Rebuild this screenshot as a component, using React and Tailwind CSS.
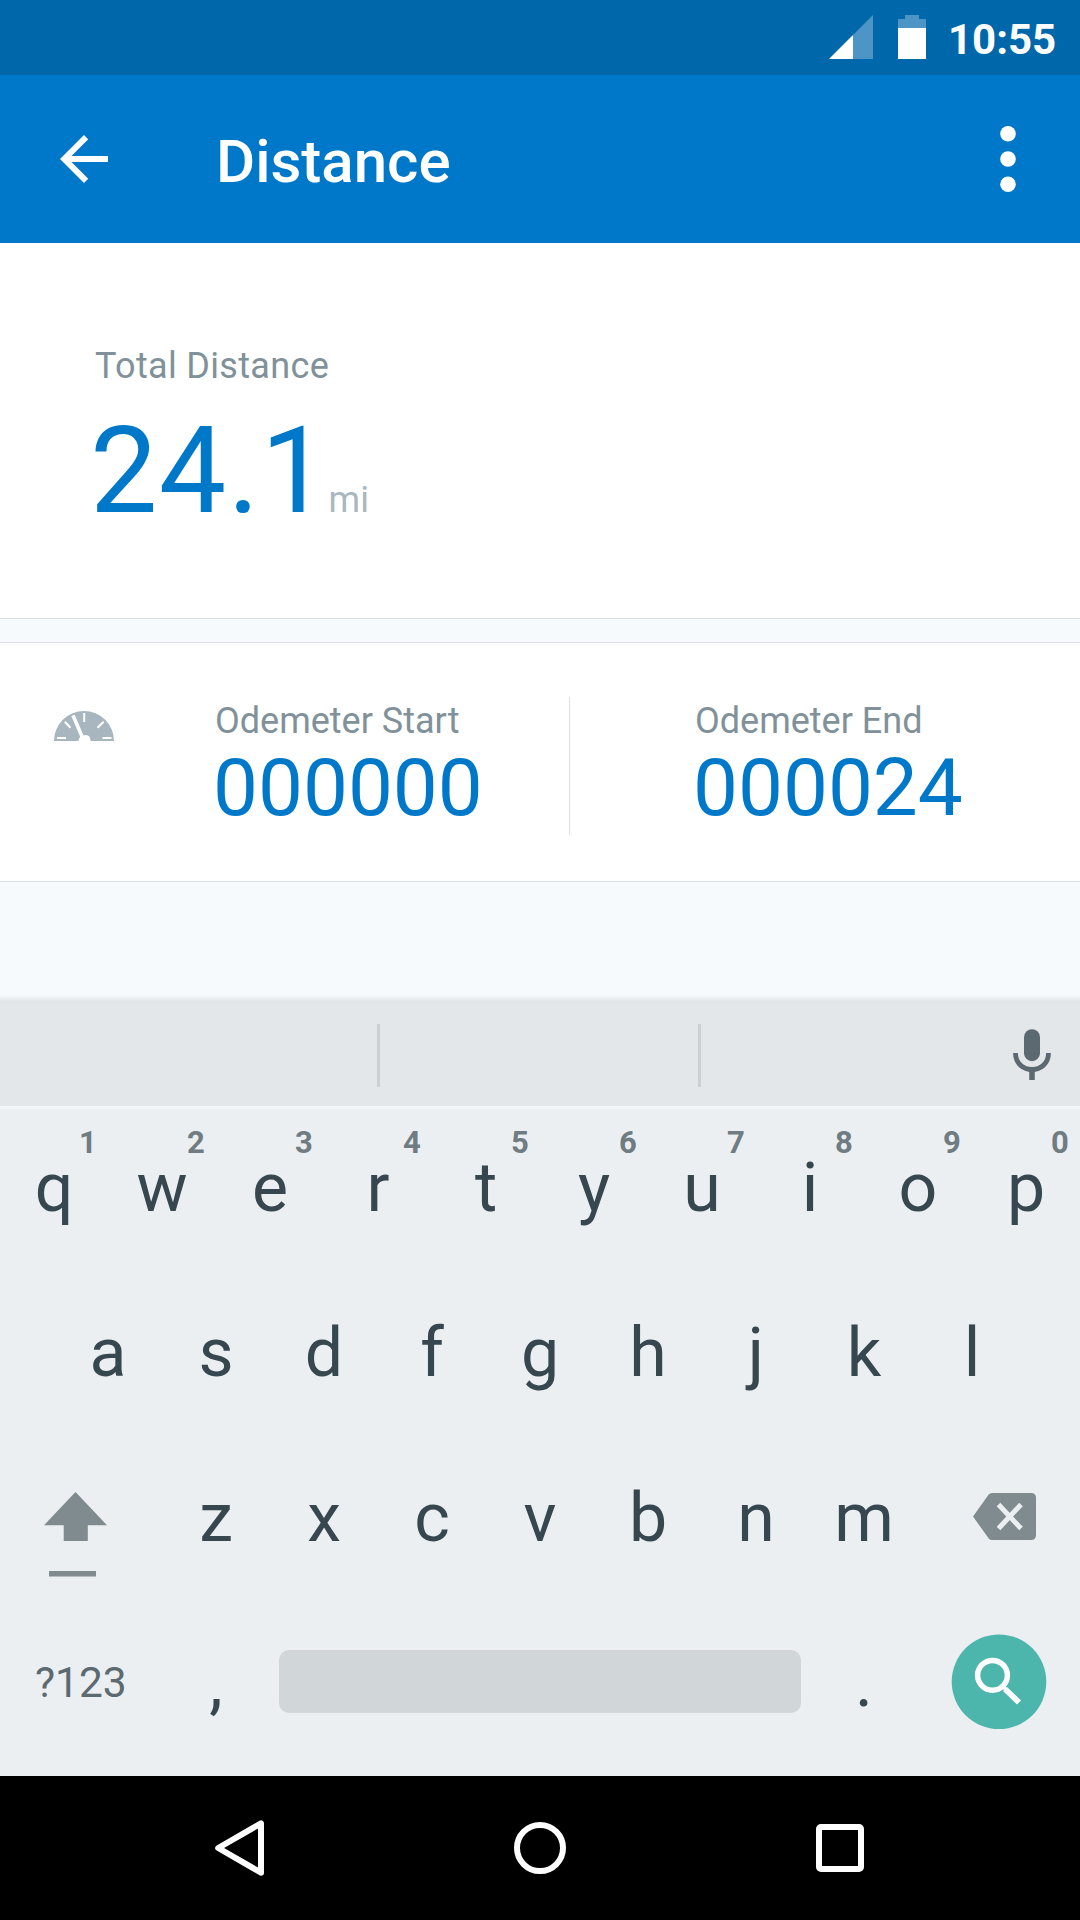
const topRow = [
  ["q", "1"], ["w", "2"], ["e", "3"], ["r", "4"], ["t", "5"],
  ["y", "6"], ["u", "7"], ["i", "8"], ["o", "9"], ["p", "0"],
];
const homeRow = ["a", "s", "d", "f", "g", "h", "j", "k", "l"];
const bottomRow = ["z", "x", "c", "v", "b", "n", "m"];

function StatusBar() {
  return (
    <div className="flex h-[75px] bg-[#0067ab] pl-[829px] text-white">
      <svg className="mt-[15px] h-[44px] w-[44px]" viewBox="0 0 44 44" fill="#fff">
        <path d="M44 0V44H0Z" opacity=".3" />
        <path d="M24 20V44H0Z" />
      </svg>
      <svg className="mt-[15px] ml-[25px] h-[44px] w-[28px]" viewBox="0 0 28 44" fill="#fff">
        <path d="M7 0H21V4H28V13H0V4H7Z" opacity=".3" />
        <path d="M0 13H28V44H0Z" />
      </svg>
      <span className="ml-[22px] text-[42px] leading-[80px] font-bold">10:55</span>
    </div>
  );
}

function AppBar() {
  return (
    <header className="flex h-[168px] items-center bg-[#0078c9] text-white">
      <svg className="ml-[48px] size-[72px]" viewBox="0 0 24 24" fill="currentColor">
        <path d="M20 11H7.83l5.59-5.59L12 4l-8 8 8 8 1.41-1.41L7.83 13H20v-2z" />
      </svg>
      <h1 className="ml-[96px] pt-[5px] text-[60px] leading-[72px] font-medium">Distance</h1>
      <svg className="ml-auto mr-[64px] h-[66px] w-[16px]" viewBox="0 0 16 66" fill="currentColor">
        <circle cx="8" cy="7.8" r="7.8" />
        <circle cx="8" cy="33" r="7.8" />
        <circle cx="8" cy="58.2" r="7.8" />
      </svg>
    </header>
  );
}

function Reading({ label, value }) {
  return (
    <div className="flex flex-col">
      <span className="text-[36px] leading-[42px] text-[#80919a]">{label}</span>
      <span className="mt-[6px] -ml-[2px] text-[80px] leading-[80px] text-[#0078c9]">{value}</span>
    </div>
  );
}

function GaugeIcon() {
  return (
    <svg className="mt-[68px] ml-[54px] h-[30px] w-[60px]" viewBox="0 0 60 30">
      <path d="M0 30A30 30 0 0 1 60 30Z" fill="#a7b6bf" />
      <g stroke="#fff" strokeWidth="2">
        <path d="M3 27H12M48.500 27H57.500M30.200 2V11M10.800 10.700L16.500 16.700M49.700 10.700L43.500 16.700" />
      </g>
      <path d="M17.300 5L20.700 3.800L29.500 24.300Q36.500 22.500 36.500 30H24.500Q24.500 27.500 26.200 25.800Z" fill="#fff" />
    </svg>
  );
}

function Key({ children }) {
  return <span className="w-[108px] text-center">{children}</span>;
}

function Keyboard() {
  return (
    <div className="flex h-[773px] flex-col bg-[#ebeff2] text-[68px] leading-[167px] text-[#37474f]">
      <div className="flex h-[103px] items-start bg-[#e3e7ea]">
        <div className="mt-[21px] ml-[377px] h-[63px] w-[3px] bg-[#cbd0d3]" />
        <div className="mt-[21px] ml-[318px] h-[63px] w-[3px] bg-[#cbd0d3]" />
        <svg className="mt-[26px] ml-[312px] h-[51px] w-[38px]" viewBox="0 0 38 51">
          <rect x="11" y="0.200" width="16" height="32" rx="8" fill="#5b6a71" />
          <path d="M2.500 24C2.500 46 35.500 46 35.500 24" fill="none" stroke="#5b6a71" strokeWidth="4.800" />
          <path d="M19 40V51" stroke="#5b6a71" strokeWidth="5.500" />
        </svg>
      </div>

      <div className="flex h-[164px] border-t-3 border-[#f3f6f8] leading-[159px]">
        {topRow.map(([letter, digit]) => (
          <span key={letter} className="relative w-[108px] text-center">
            {letter}
            <span className="absolute top-[16px] left-[79px] text-[31px] leading-[36px] font-bold text-[#6f7c82]">
              {digit}
            </span>
          </span>
        ))}
      </div>

      <div className="flex h-[165px] justify-center">
        {homeRow.map((k) => <Key key={k}>{k}</Key>)}
      </div>

      <div className="flex h-[165px]">
        <div className="w-[162px] pt-[57px] pl-[44px]">
          <svg className="h-[85px] w-[63px]" viewBox="0 0 63 85" fill="#808b8f">
            <path d="M31.500 0L63 33.200H43.800V49H19.700V33.200H0Z" />
            <path d="M5 79H52V84.500H5Z" />
          </svg>
        </div>
        {bottomRow.map((k) => <Key key={k}>{k}</Key>)}
        <svg className="mt-[58px] ml-[55px] h-[47px] w-[63px]" viewBox="0 0.5 63 47">
          <path d="M19 .5H58Q63 .5 63 5.500V42.500Q63 47.500 58 47.500H19Q17 47.500 15.700 46L0 24L15.700 2Q17 .5 19 .5Z" fill="#808b8f" />
          <path d="M25.500 12L48 36M48 12L25.500 36" stroke="#ebeff2" strokeWidth="5" />
        </svg>
      </div>

      <div className="flex h-[176px]">
        <span className="w-[162px] pl-[35px] text-[42.5px] leading-[165px] text-[#5b6a71]">?123</span>
        <Key>,</Key>
        <div className="mt-[50px] ml-[9px] h-[63px] w-[522px] rounded-[10px] bg-[#d1d6d9]" />
        <span className="ml-[9px] w-[108px] text-center">.</span>
        <svg className="mt-[34px] ml-[33px] size-[96px]" viewBox="-0.5 0 96 96" fill="none" stroke="#fff">
          <circle cx="47.500" cy="47.800" r="47.300" fill="#4db6ac" stroke="none" />
          <circle cx="41" cy="41.300" r="14.900" strokeWidth="5.500" />
          <path d="M53.500 55L67.500 68.500" strokeWidth="5.800" />
          <path d="M50.500 51.500L55 56" strokeWidth="3.500" />
        </svg>
      </div>
    </div>
  );
}

function NavBar() {
  return (
    <nav className="flex h-[144px] items-center bg-black pl-[215px]">
      <svg className="h-[56px] w-[49px]" viewBox="0 0 49 56" fill="none" stroke="#fff" strokeWidth="6" strokeLinejoin="round">
        <path d="M46 3.300V52.700L3.200 28Z" />
      </svg>
      <div className="ml-[250px] size-[52px] rounded-full border-6 border-white" />
      <div className="ml-[250px] size-[48px] rounded-[5px] border-6 border-white" />
    </nav>
  );
}

export default function App() {
  return (
    <div className="flex h-[1920px] w-[1080px] flex-col overflow-hidden bg-[#f6fafd] font-['Roboto',sans-serif]">
      <StatusBar />
      <AppBar />
      <section className="h-[376px] border-b border-[#dbdfe7] bg-white pt-[102px] pl-[95px]">
        <div className="text-[36px] leading-[42px] tracking-[0.33px] text-[#80919a]">Total Distance</div>
        <div className="mt-[24px] -ml-[5px] flex items-baseline">
          <span className="text-[120px] leading-[120px] tracking-[1.4px] text-[#0078c9]">24.1</span>
          <span className="-ml-px text-[36px] text-[#a9b7c0]">mi</span>
        </div>
      </section>
      <section className="mt-[23px] flex h-[240px] border-y border-[#dbdfe7] bg-white">
        <GaugeIcon />
        <div className="ml-[101px] w-[354px] pt-[57px]">
          <Reading label="Odemeter Start" value="000000" />
        </div>
        <div className="mt-[54px] h-[138px] w-px bg-[#dbdfe7]" />
        <div className="ml-[125px] pt-[57px]">
          <Reading label="Odemeter End" value="000024" />
        </div>
      </section>
      <div className="mt-auto h-[8px] shrink-0 bg-linear-to-b from-[#f6fafd] to-[#dfe2e5]" />
      <Keyboard />
      <NavBar />
    </div>
  );
}
